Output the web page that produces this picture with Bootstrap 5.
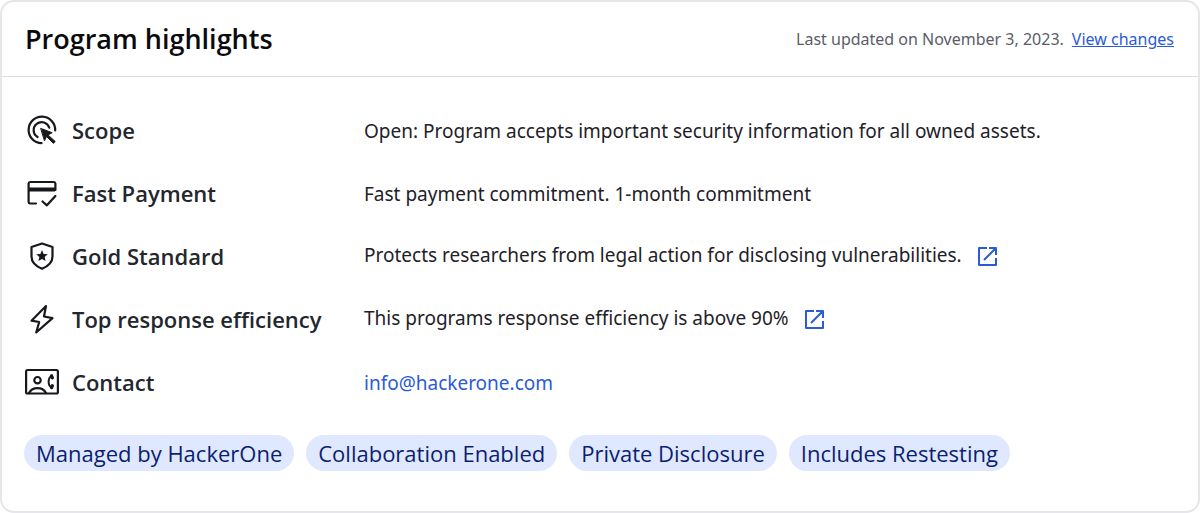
<!DOCTYPE html>
<html lang="en">
<head>
<meta charset="utf-8">
<meta name="viewport" content="width=device-width, initial-scale=1">
<title>Program highlights</title>
<link href="https://cdn.jsdelivr.net/npm/bootstrap@5.3.0/dist/css/bootstrap.min.css" rel="stylesheet">
<style>
  body { font-family: "Open Sans", "Noto Sans", sans-serif; color: #1f2128; background: #fff; }
  .highlights { border: 2px solid #e7e7eb; border-radius: 14px; }
  .highlights-head { padding: 0 24px 0 23px; min-height: 75px; border-bottom: 1px solid #dedee3; }
  .highlights-title { font-size: 27px; line-height: 36px; font-weight: 600; color: #0b0b0d; }
  .updated { font-family: "Noto Sans", sans-serif; font-size: 16px; line-height: 24px; color: #5b5c66; }
  a { color: #2b5bd7; }
  .facts { padding: 22px 23px 0; }
  .fact { min-height: 63px; }
  .fact-label { flex: 0 0 339px; gap: 13px; padding-bottom: 2px; font-size: 22px; line-height: 32px; font-weight: 600; color: #24262d; }
  .fact-icon { width: 34px; height: 34px; flex: none; }
  .fact-text { font-family: "Noto Sans", sans-serif; font-size: 19px; line-height: 28px; gap: 14px; }
  .fact-text span { padding-bottom: 4px; }
  .open-icon { width: 24px; height: 24px; display: block; }
  .tags { padding: 21px 22px 40px; gap: 12px; }
  .tag { padding: 0 12px; font-size: 22px; line-height: 36px; background: #e0e8ff; color: #0a1f70; }
</style>
</head>
<body>
<main class="highlights">
  <header class="highlights-head d-flex flex-wrap align-items-center justify-content-between">
    <h1 class="highlights-title mb-0">Program highlights</h1>
    <p class="updated d-flex flex-wrap gap-2 mb-0"><span>Last updated on November 3, 2023.</span><a href="#changes">View changes</a></p>
  </header>
  <dl class="facts mb-0">
    <div class="fact d-flex align-items-center">
      <dt class="fact-label d-flex align-items-center">
        <svg class="fact-icon" viewBox="0 0 34 34" fill="none" stroke="#17181c" stroke-width="2.2" stroke-linecap="round" aria-hidden="true"><path d="M16.5 30.2A13.3 13.3 0 1 1 30.2 17.5M12.6 24A8 8 0 1 1 24.3 14.8"/><path d="M16 15.500l11.200 4.200-4.200 2.200 7.200 6.600-1.800 1.900-6.900-6.900-1.900 4z" fill="#17181c" stroke-width="1" stroke-linejoin="round"/></svg>
        <span>Scope</span>
      </dt>
      <dd class="fact-text mb-0">Open: Program accepts important security information for all owned assets.</dd>
    </div>
    <div class="fact d-flex align-items-center">
      <dt class="fact-label d-flex align-items-center">
        <svg class="fact-icon" viewBox="0 0 34 34" fill="none" stroke="#17181c" stroke-width="2.2" stroke-linecap="round" stroke-linejoin="round" aria-hidden="true"><path d="M11 27.500H5.200A1.600 1.600 0 0 1 3.600 26V7.500A1.600 1.600 0 0 1 5.200 6H28.800A1.600 1.600 0 0 1 30.400 7.500V14M17.500 25.500l4.400 3.800L30.400 20"/><path d="M4 12h26v3H4z" fill="#17181c" stroke-width="1"/></svg>
        <span>Fast Payment</span>
      </dt>
      <dd class="fact-text mb-0">Fast payment commitment. 1-month commitment</dd>
    </div>
    <div class="fact d-flex align-items-center">
      <dt class="fact-label d-flex align-items-center">
        <svg class="fact-icon" viewBox="0 0 34 34" aria-hidden="true"><path d="M17 4.500L27.500 8v9.500c0 5.500-4.600 9.800-10.500 12.300C11.100 27.300 6.500 23 6.500 17.500V8z" fill="none" stroke="#17181c" stroke-width="2.200" stroke-linejoin="round"/><path d="M17 11l1.600 4 4.200.3-3.200 2.700 1 4.100-3.600-2.200-3.600 2.200 1-4.100-3.200-2.700 4.200-.3z" fill="#17181c"/></svg>
        <span>Gold Standard</span>
      </dt>
      <dd class="fact-text d-flex align-items-center mb-0"><span>Protects researchers from legal action for disclosing vulnerabilities.</span>
        <a href="#gold-standard" aria-label="Read about the Gold Standard"><svg class="open-icon" viewBox="0 0 24 24" fill="none" stroke="#2b5bd7" stroke-width="2" stroke-linejoin="round" aria-hidden="true"><path d="M11 3H3v17h17v-7M8 15L20 3M13 3h7v7"/></svg></a>
      </dd>
    </div>
    <div class="fact d-flex align-items-center">
      <dt class="fact-label d-flex align-items-center">
        <svg class="fact-icon" viewBox="0 0 34 34" fill="none" stroke="#17181c" stroke-width="2.200" stroke-linejoin="round" aria-hidden="true"><path d="M21 4L6.500 18.700l7.700 1.300-3 10.500L27.500 16.200l-8.500-1.700z"/></svg>
        <span>Top response efficiency</span>
      </dt>
      <dd class="fact-text d-flex align-items-center mb-0"><span>This programs response efficiency is above 90%</span>
        <a href="#efficiency" aria-label="Read about response efficiency"><svg class="open-icon" viewBox="0 0 24 24" fill="none" stroke="#2b5bd7" stroke-width="2" stroke-linejoin="round" aria-hidden="true"><path d="M11 3H3v17h17v-7M8 15L20 3M13 3h7v7"/></svg></a>
      </dd>
    </div>
    <div class="fact d-flex align-items-center">
      <dt class="fact-label d-flex align-items-center">
        <svg class="fact-icon" viewBox="0 0 34 34" fill="none" stroke="#17181c" stroke-width="2.200" stroke-linecap="round" aria-hidden="true"><rect x="1.100" y="5" width="31.800" height="23.500" rx="1.500"/><circle cx="12.500" cy="15.200" r="3.200"/><path d="M4 28c3.500-6.500 13.500-6.500 17 0"/><path d="M27 10.500c-4.500 2.500-4.500 10 0 12.500" stroke-width="2"/><path d="M26.600 10.800l.8 2M26.600 22.700l.8-2" stroke-width="3.200"/></svg>
        <span>Contact</span>
      </dt>
      <dd class="fact-text mb-0"><a class="text-decoration-none" href="mailto:info@hackerone.com">info@hackerone.com</a></dd>
    </div>
  </dl>
  <ul class="tags list-unstyled d-flex flex-wrap mb-0">
    <li class="tag rounded-pill">Managed by HackerOne</li>
    <li class="tag rounded-pill">Collaboration Enabled</li>
    <li class="tag rounded-pill">Private Disclosure</li>
    <li class="tag rounded-pill">Includes Restesting</li>
  </ul>
</main>
<script src="https://cdn.jsdelivr.net/npm/bootstrap@5.3.0/dist/js/bootstrap.bundle.min.js"></script>
</body>
</html>
